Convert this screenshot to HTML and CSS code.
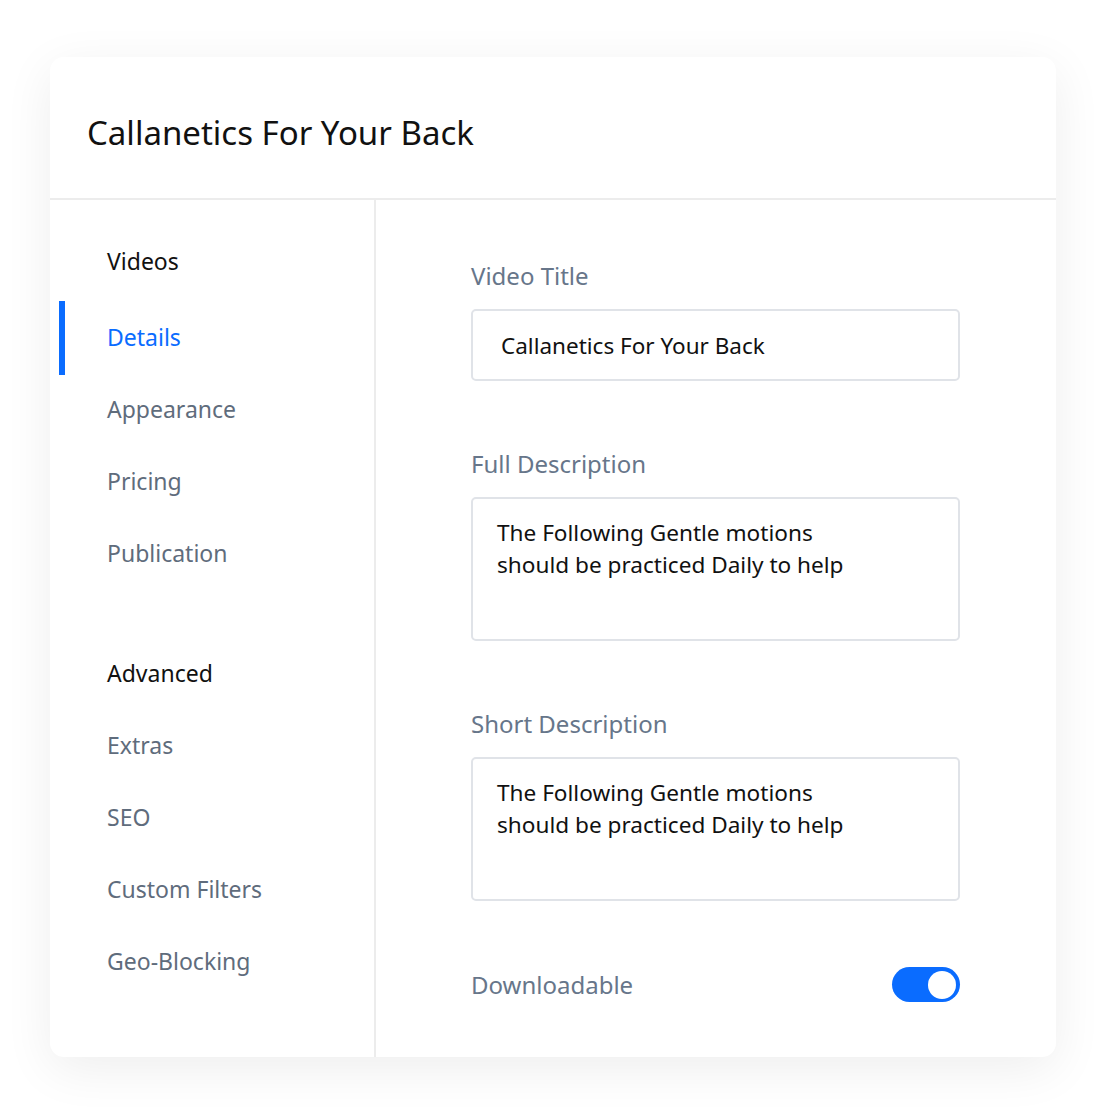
FILE: index.html
```html
<!DOCTYPE html>
<html lang="en">
<head>
    <meta charset="UTF-8">
    <meta name="viewport" content="width=device-width, initial-scale=1.0" />
    <title>Video details</title>
    <link rel="stylesheet" href="styles.css">
</head>
<body>
    <main class="page">
        <section class="card">
            <header class="card-head">
                <h1>Callanetics For Your Back</h1>
            </header>
            <div class="card-body">
                <nav class="side">
                    <div class="side-group">
                        <div class="side-title">Videos</div>
                        <a class="side-item active">Details</a>
                        <a class="side-item">Appearance</a>
                        <a class="side-item">Pricing</a>
                        <a class="side-item">Publication</a>
                    </div>
                    <div class="side-group second">
                        <div class="side-title">Advanced</div>
                        <a class="side-item">Extras</a>
                        <a class="side-item">SEO</a>
                        <a class="side-item">Custom Filters</a>
                        <a class="side-item">Geo-Blocking</a>
                    </div>
                </nav>
                <div class="form">
                    <div class="field">
                        <label>Video Title</label>
                        <div class="input">Callanetics For Your Back</div>
                    </div>
                    <div class="field">
                        <label>Full Description</label>
                        <div class="textarea">The Following Gentle motions<br>should be practiced Daily to help</div>
                    </div>
                    <div class="field">
                        <label>Short Description</label>
                        <div class="textarea">The Following Gentle motions<br>should be practiced Daily to help</div>
                    </div>
                    <div class="switch-row">
                        <label>Downloadable</label>
                        <span class="switch"><span class="knob"></span></span>
                    </div>
                </div>
            </div>
        </section>
    </main>
</body>
</html>
```

FILE: styles.css
```css
html, body {margin: 0; padding: 0; background: #fff; font-family: "Noto Sans", "Open Sans", sans-serif; color: #111;}
.page {padding: 57px 48px 60px 50px;}

.card {
    background: #fff;
    border-radius: 14px;
    box-shadow: 0 12px 50px rgba(0, 0, 0, 0.07);
    height: 1000px;
    display: flex;
    flex-direction: column;
    overflow: hidden;
}
.card-head {height: 141px; border-bottom: 2px solid #ececec; display: flex; align-items: center; padding-left: 37px;}
.card-head h1 {margin: 0; font-weight: 400; font-size: 33px; color: #111; padding-top: 10px;}

.card-body {flex: 1; display: flex;}

.side {width: 324px; border-right: 2px solid #ececec; padding-top: 25px;}
.side-group.second {margin-top: 48px;}
.side-title {height: 72px; display: flex; align-items: center; padding-left: 57px; font-size: 23px; color: #111;}
.side-group:first-child .side-title {margin-bottom: 4px;}
.side-item {height: 72px; display: flex; align-items: center; padding-left: 57px; font-size: 23px; color: #5f6c7c; position: relative;}
.side-item.active {color: #0a6cff;}
.side-item.active::before {content: ""; position: absolute; left: 9px; top: 0; width: 6px; height: 74px; background: #0a6cff;}

.form {flex: 1; padding: 60px 96px 0 95px;}
.field {margin-bottom: 67px;}
.field label, .switch-row label {display: block; font-size: 24px; line-height: 32px; color: #67768a; margin-bottom: 17px;}
.input {height: 68px; border: 2px solid #e0e3e8; border-radius: 5px; display: flex; align-items: center; padding-left: 28px; font-size: 22.5px; color: #111;}
.textarea {height: 122px; border: 2px solid #e0e3e8; border-radius: 5px; padding: 18px 24px 0; font-size: 22.6px; line-height: 32px; color: #111;}

.switch-row {display: flex; align-items: center; justify-content: space-between; margin-top: -1px;}
.switch-row label {margin-bottom: 0;}
.switch {width: 68px; height: 35px; border-radius: 18px; background: #0a6cff; display: flex; align-items: center; justify-content: flex-end; padding-right: 4px; box-sizing: border-box;}
.knob {width: 28px; height: 28px; border-radius: 50%; background: #fff;}
```
